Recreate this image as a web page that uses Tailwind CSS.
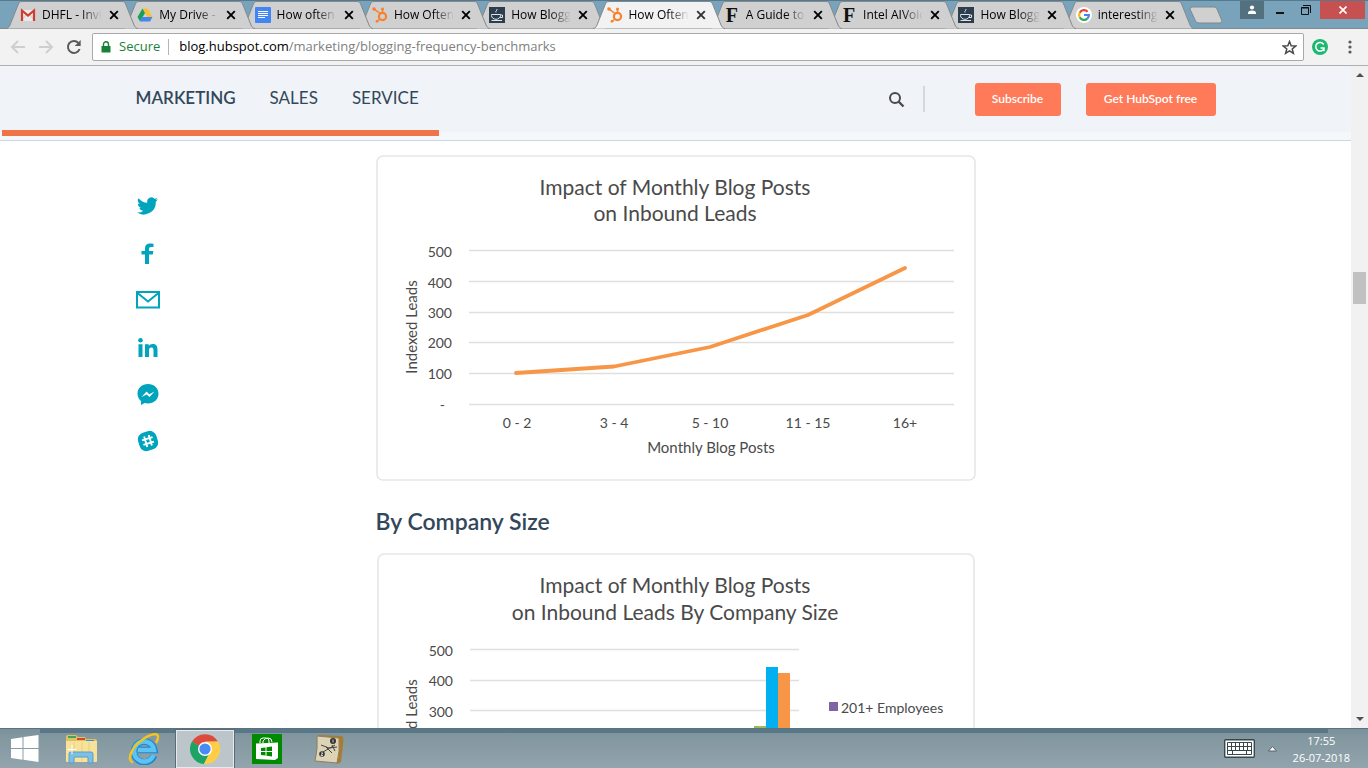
<!DOCTYPE html>
<html lang="en">
<head>
    <meta charset="UTF-8">
    <meta name="viewport" content="width=device-width, initial-scale=1.0">
    <title>How Often Should You Blog?</title>
    <script src="https://cdn.jsdelivr.net/npm/@tailwindcss/browser@4"></script>
</head>
<body class="h-screen flex flex-col overflow-hidden bg-white font-['Open_Sans',sans-serif]">

    <!-- Shared shapes -->
    <svg class="hidden">
        <symbol id="tab" viewBox="0 0 132 29">
            <path d="M0 28.5 C2 28.5 3 27 4 25 L12 5 C13 2.500 14 1.500 16 1.500 H116 C118 1.500 119 2.500 120 5 L128 25 C129 27 130 28.500 132 28.500 Z" fill="currentColor"/>
            <path d="M0 28.500 C2 28.500 3 27 4 25 L12 5 C13 2.500 14 1.500 16 1.500 H116 C118 1.500 119 2.500 120 5 L128 25 C129 27 130 28.500 132 28.500" fill="none" stroke="#83898d"/>
        </symbol>
        <symbol id="close" viewBox="0 0 10 10">
            <path d="M1.200 1.200 L8.800 8.800 M8.800 1.200 L1.200 8.800" stroke="currentColor" stroke-width="1.900"/>
        </symbol>
        <symbol id="gmail" viewBox="0 0 16 16">
            <path d="M1 3h14v11H1z" fill="#e9e9e9"/>
            <path d="M1 14 L6 8 M15 14 L10 8" stroke="#c9c9c9" fill="none"/>
            <path d="M2 14 V3.500 L8 8.500 L14 3.500 V14" fill="none" stroke="#d33b2f" stroke-width="2.200"/>
        </symbol>
        <symbol id="drive" viewBox="0 0 16 16">
            <path d="M5.500 1.500h5l5 8.500h-5z" fill="#fbc02d"/>
            <path d="M5.500 1.500L8 6 3 14.500 0.500 10z" fill="#1a9f5a"/>
            <path d="M5.400 10h10.100L13 14.500H3z" fill="#4285f4"/>
        </symbol>
        <symbol id="docs" viewBox="0 0 16 16">
            <rect width="16" height="16" rx="1" fill="#4285f4"/>
            <path d="M3 4.500h10M3 6.500h10M3 8.500h10M3 10.500h7" stroke="#fff"/>
        </symbol>
        <symbol id="sprocket" viewBox="0 0 16 16">
            <g fill="none" stroke="#f8812f">
                <circle cx="10.500" cy="9.500" r="3.600" stroke-width="2.200"/>
                <path d="M2 1.800 L8 6.500 M10.500 6 V2.500 M8 12 L5 14.500" stroke-width="1.500"/>
            </g>
            <g fill="#f8812f">
                <circle cx="2" cy="2" r="1.800"/>
                <circle cx="10.500" cy="2" r="1.500"/>
                <circle cx="5" cy="14.300" r="1.400"/>
            </g>
        </symbol>
        <symbol id="cup" viewBox="0 0 16 16">
            <rect width="16" height="16" fill="#2c3e4e"/>
            <path d="M2.500 7.500h9v1a4.500 3.800 0 0 1-9 0z M11.500 8h2v2.500h-2.500 M2.500 13.500h10.500 M7 5.500C6 4 8.500 3.500 8 2" fill="none" stroke="#dfe5e8"/>
        </symbol>
        <symbol id="google" viewBox="0 0 16 16">
            <circle cx="8" cy="8" r="8" fill="#fff"/>
            <g fill="none" stroke-width="2.200">
                <path d="M11.600 4.700A4.900 4.900 0 0 0 3.700 5.700" stroke="#ea4335"/>
                <path d="M3.700 5.700A4.900 4.900 0 0 0 3.700 10.300" stroke="#fbbc05"/>
                <path d="M3.700 10.300A4.900 4.900 0 0 0 11.300 11.600" stroke="#34a853"/>
                <path d="M11.300 11.600A4.900 4.900 0 0 0 12.900 8H8" stroke="#4285f4"/>
            </g>
        </symbol>
    </svg>

    <!-- Tab strip -->
    <div class="h-[29px] shrink-0 flex bg-[#79a3bb] border-t border-[#557a8e] shadow-[inset_0_-1px_0_#83898d] text-xs text-black">
        <div class="w-[1173px] ml-1.5 -mt-px grid grid-cols-10">
            <div class="relative z-9 w-[132px] h-[29px] pl-3.5 flex items-center text-[#d0d0d0]">
                <svg class="absolute inset-0 w-full h-full"><use href="#tab"/></svg>
                <svg class="relative w-4 h-4 shrink-0"><use href="#gmail"/></svg>
                <button class="relative ml-1.5 w-[60px] overflow-hidden whitespace-nowrap text-left text-black [mask-image:linear-gradient(to_right,#000_65%,transparent)]">DHFL - Invitation</button>
                <button aria-label="Close tab" class="relative ml-[7px] text-black"><svg class="w-2.5 h-2.5"><use href="#close"/></svg></button>
            </div>
            <div class="relative z-8 w-[132px] h-[29px] pl-3.5 flex items-center text-[#d0d0d0]">
                <svg class="absolute inset-0 w-full h-full"><use href="#tab"/></svg>
                <svg class="relative w-4 h-4 shrink-0"><use href="#drive"/></svg>
                <button class="relative ml-1.5 w-[60px] overflow-hidden whitespace-nowrap text-left text-black [mask-image:linear-gradient(to_right,#000_65%,transparent)]">My Drive - </button>
                <button aria-label="Close tab" class="relative ml-[7px] text-black"><svg class="w-2.5 h-2.5"><use href="#close"/></svg></button>
            </div>
            <div class="relative z-7 w-[132px] h-[29px] pl-3.5 flex items-center text-[#d0d0d0]">
                <svg class="absolute inset-0 w-full h-full"><use href="#tab"/></svg>
                <svg class="relative w-4 h-4 shrink-0"><use href="#docs"/></svg>
                <button class="relative ml-1.5 w-[60px] overflow-hidden whitespace-nowrap text-left text-black [mask-image:linear-gradient(to_right,#000_65%,transparent)]">How often</button>
                <button aria-label="Close tab" class="relative ml-[7px] text-black"><svg class="w-2.5 h-2.5"><use href="#close"/></svg></button>
            </div>
            <div class="relative z-6 w-[132px] h-[29px] pl-3.5 flex items-center text-[#d0d0d0]">
                <svg class="absolute inset-0 w-full h-full"><use href="#tab"/></svg>
                <svg class="relative w-4 h-4 shrink-0"><use href="#sprocket"/></svg>
                <button class="relative ml-1.5 w-[60px] overflow-hidden whitespace-nowrap text-left text-black [mask-image:linear-gradient(to_right,#000_65%,transparent)]">How Often</button>
                <button aria-label="Close tab" class="relative ml-[7px] text-black"><svg class="w-2.5 h-2.5"><use href="#close"/></svg></button>
            </div>
            <div class="relative z-5 w-[132px] h-[29px] pl-3.5 flex items-center text-[#d0d0d0]">
                <svg class="absolute inset-0 w-full h-full"><use href="#tab"/></svg>
                <svg class="relative w-4 h-4 shrink-0"><use href="#cup"/></svg>
                <button class="relative ml-1.5 w-[60px] overflow-hidden whitespace-nowrap text-left text-black [mask-image:linear-gradient(to_right,#000_65%,transparent)]">How Blogg</button>
                <button aria-label="Close tab" class="relative ml-[7px] text-black"><svg class="w-2.5 h-2.5"><use href="#close"/></svg></button>
            </div>
            <!-- Active tab -->
            <div class="relative z-20 w-[132px] h-[29px] pl-3.5 flex items-center text-[#f2f2f2]">
                <svg class="absolute inset-0 w-full h-full"><use href="#tab"/></svg>
                <svg class="relative w-4 h-4 shrink-0"><use href="#sprocket"/></svg>
                <button class="relative ml-1.5 w-[60px] overflow-hidden whitespace-nowrap text-left text-black [mask-image:linear-gradient(to_right,#000_65%,transparent)]">How Often</button>
                <button aria-label="Close tab" class="relative ml-[7px] text-[#333]"><svg class="w-2.5 h-2.5"><use href="#close"/></svg></button>
            </div>
            <div class="relative z-4 w-[132px] h-[29px] pl-3.5 flex items-center text-[#d0d0d0]">
                <svg class="absolute inset-0 w-full h-full"><use href="#tab"/></svg>
                <span class="relative w-4 shrink-0 text-center font-['Liberation_Serif',serif] font-bold text-xl leading-4 text-[#111]">F</span>
                <button class="relative ml-1.5 w-[60px] overflow-hidden whitespace-nowrap text-left text-black [mask-image:linear-gradient(to_right,#000_65%,transparent)]">A Guide to</button>
                <button aria-label="Close tab" class="relative ml-[7px] text-black"><svg class="w-2.5 h-2.5"><use href="#close"/></svg></button>
            </div>
            <div class="relative z-3 w-[132px] h-[29px] pl-3.5 flex items-center text-[#d0d0d0]">
                <svg class="absolute inset-0 w-full h-full"><use href="#tab"/></svg>
                <span class="relative w-4 shrink-0 text-center font-['Liberation_Serif',serif] font-bold text-xl leading-4 text-[#111]">F</span>
                <button class="relative ml-1.5 w-[60px] overflow-hidden whitespace-nowrap text-left text-black [mask-image:linear-gradient(to_right,#000_65%,transparent)]">Intel AIVoice</button>
                <button aria-label="Close tab" class="relative ml-[7px] text-black"><svg class="w-2.5 h-2.5"><use href="#close"/></svg></button>
            </div>
            <div class="relative z-2 w-[132px] h-[29px] pl-3.5 flex items-center text-[#d0d0d0]">
                <svg class="absolute inset-0 w-full h-full"><use href="#tab"/></svg>
                <svg class="relative w-4 h-4 shrink-0"><use href="#cup"/></svg>
                <button class="relative ml-1.5 w-[60px] overflow-hidden whitespace-nowrap text-left text-black [mask-image:linear-gradient(to_right,#000_65%,transparent)]">How Blogg</button>
                <button aria-label="Close tab" class="relative ml-[7px] text-black"><svg class="w-2.5 h-2.5"><use href="#close"/></svg></button>
            </div>
            <div class="relative z-1 w-[132px] h-[29px] pl-3.5 flex items-center text-[#d0d0d0]">
                <svg class="absolute inset-0 w-full h-full"><use href="#tab"/></svg>
                <svg class="relative w-4 h-4 shrink-0"><use href="#google"/></svg>
                <button class="relative ml-1.5 w-[60px] overflow-hidden whitespace-nowrap text-left text-black [mask-image:linear-gradient(to_right,#000_65%,transparent)]">interesting</button>
                <button aria-label="Close tab" class="relative ml-[7px] text-black"><svg class="w-2.5 h-2.5"><use href="#close"/></svg></button>
            </div>
        </div>
        <button aria-label="New tab" class="ml-2.5 self-center">
            <svg width="34" height="18" viewBox="0 0 34 18"><path d="M3.500 1 H25 Q27 1 28 3 L33 15 Q33 17 31 17 H10 Q7.500 17 6.500 15 L1 3 Q1 1 3.500 1 Z" fill="#d0d0d0" stroke="#83898d"/></svg>
        </button>

        <!-- Window buttons -->
        <div class="ml-auto mr-[3px] h-[18px] flex items-stretch">
            <button aria-label="Profile" class="w-6 bg-[#53707f] grid place-items-center">
                <svg width="10" height="10" viewBox="0 0 10 10" fill="#fff"><circle cx="5" cy="2.500" r="2.100"/><path d="M1 9V7.500Q1.500 5.500 5 5.500T9 7.500V9z"/></svg>
            </button>
            <button aria-label="Minimize" class="w-8 grid place-items-center">
                <svg width="8" height="10" viewBox="0 0 8 10"><path d="M0 8h8" stroke="#111" stroke-width="2"/></svg>
            </button>
            <button aria-label="Restore" class="w-6 pr-1 grid place-items-center">
                <svg width="10" height="10" viewBox="0 0 10 10" fill="none" stroke="#111"><path d="M2 .5h7.500v7.500M.5 2.500h7v7h-7z"/><path d="M0 3h8"/></svg>
            </button>
            <button aria-label="Close" class="w-[45px] bg-[#c75050] grid place-items-center">
                <svg width="8" height="8" viewBox="0 0 8 8"><path d="M.5.5l7 7M7.500.5l-7 7" stroke="#fff" stroke-width="1.700"/></svg>
            </button>
        </div>
    </div>

    <!-- Toolbar -->
    <div class="h-[37px] shrink-0 bg-[#f2f2f2] border-b border-[#b0b0b0] flex items-center pl-2.5">
        <button aria-label="Back" class="w-7"><svg width="16" height="16" viewBox="0 0 16 16" fill="none" stroke="#cfcfcf" stroke-width="2"><path d="M15 8H2.500M8 2L2 8l6 6"/></svg></button>
        <button aria-label="Forward" class="w-7"><svg width="16" height="16" viewBox="0 0 16 16" fill="none" stroke="#cfcfcf" stroke-width="2"><path d="M1 8h12.500M8 2l6 6-6 6"/></svg></button>
        <button aria-label="Reload" class="w-[26px]"><svg width="16" height="16" viewBox="0 0 16 16"><path d="M13.600 10A6 6 0 1 1 12.400 3.900" fill="none" stroke="#5a5a5a" stroke-width="2"/><path d="M14.700 1v6h-6z" fill="#5a5a5a"/></svg></button>
        <div class="flex-1 h-7 rounded-xs border border-[#a9a9a9] bg-white flex items-center pl-2 pr-1.5 text-[13px] whitespace-nowrap">
            <svg width="10" height="12" viewBox="0 0 10 12"><path d="M.5 5h9v6.500h-9z" fill="#188038"/><path d="M2.500 5V3.200a2.500 2.500 0 0 1 5 0V5" fill="none" stroke="#188038" stroke-width="1.400"/></svg>
            <span class="ml-2 text-[#188038]">Secure</span>
            <span class="ml-2 w-px h-4 bg-[#b5b5b5]"></span>
            <div class="ml-2.5 flex-1 text-[#808080]" role="textbox" aria-label="Address"><span class="text-black">blog.hubspot.com</span>/marketing/blogging-frequency-benchmarks</div>
            <button aria-label="Bookmark"><svg width="15" height="15" viewBox="0 0 15 15"><path d="M7.500 1.500l1.700 4.200 4.500.3-3.500 2.900 1.200 4.400-3.900-2.500-3.900 2.500 1.200-4.400L1.300 6l4.500-.3z" fill="none" stroke="#4a4a4a" stroke-width="1.500"/></svg></button>
        </div>
        <button aria-label="Grammarly" class="ml-2"><svg width="16" height="16" viewBox="0 0 16 16"><circle cx="8" cy="8" r="8" fill="#1cb870"/><path d="M11.700 5.500A4.300 4.300 0 1 0 12 9.500M8.500 9h3.500v3.200" fill="none" stroke="#fff" stroke-width="1.500"/></svg></button>
        <button aria-label="Menu" class="ml-5 mr-4"><svg width="4" height="14" viewBox="0 0 4 14" fill="#5a5a5a"><circle cx="2" cy="2" r="1.600"/><circle cx="2" cy="7" r="1.600"/><circle cx="2" cy="12" r="1.600"/></svg></button>
    </div>

    <!-- Viewport -->
    <div class="flex-1 min-h-0 flex">
        <div class="flex-1 min-w-0 overflow-hidden">
            <header class="relative h-[75px] bg-[#f0f4f8] border-b border-[#cbd6e2]">
                <div class="max-w-[1080px] h-[66px] mx-auto flex items-center font-[Lato,sans-serif] text-[#33475b]">
                    <nav class="flex gap-[34px] pb-0.5 text-[17px]">
                        <a href="#" class="font-semibold">MARKETING</a>
                        <a href="#">SALES</a>
                        <a href="#">SERVICE</a>
                    </nav>
                    <button aria-label="Search" class="ml-auto"><svg width="17" height="17" viewBox="0 0 17 17" fill="none" stroke="#4a4a4a"><circle cx="7" cy="7" r="5" stroke-width="2"/><path d="M10.500 10.500l5 5" stroke-width="2.400"/></svg></button>
                    <span class="ml-[18px] w-0.5 h-[26px] bg-[#d3d8dc]"></span>
                    <button class="ml-[50px] w-[86px] h-[33px] rounded-[3px] bg-[#ff7a59] text-white text-xs font-semibold">Subscribe</button>
                    <button class="ml-[25px] w-[130px] h-[33px] rounded-[3px] bg-[#ff7a59] text-white text-xs font-semibold">Get HubSpot free</button>
                </div>
                <div class="h-2 bg-[#f5f8fa]"></div>
                <!-- Reading progress -->
                <div class="absolute left-0.5 top-16 h-1.5 bg-[#ef7547]" style="width: 437px"></div>
            </header>

            <main class="max-w-[1080px] mx-auto flex pt-3.5">
                <div class="w-[240px] shrink-0 pt-[39px] flex flex-col gap-[23px] text-[#00a4bd]">
                    <a href="#" aria-label="Twitter" class="w-6 h-6 grid place-items-center"><svg width="21" height="18" viewBox="0 0 24 20" fill="currentColor"><path d="M24 2.400a10 10 0 0 1-2.800.8A5 5 0 0 0 23.300.5a10 10 0 0 1-3.100 1.200A4.900 4.900 0 0 0 11.800 6.200 14 14 0 0 1 1.700 1a5 5 0 0 0 1.500 6.600A5 5 0 0 1 1 7a5 5 0 0 0 3.900 4.900 5 5 0 0 1-2.200.1 5 5 0 0 0 4.600 3.400A10 10 0 0 1 0 17.500 14 14 0 0 0 21.500 5z"/></svg></a>
                    <a href="#" aria-label="Facebook" class="w-6 h-6 grid place-items-center"><svg width="13" height="21" viewBox="0 0 13 21" fill="currentColor"><path d="M4 21v-9.500H.500V8H4V5.200C4 2 6 .5 8.800.5c1.400 0 3.200.1 3.700.2V4h-2.300C8.500 4 8 4.700 8 5.800V8h4.300l-.5 3.500H8V21z"/></svg></a>
                    <a href="#" aria-label="Email" class="w-6 h-6 grid place-items-center"><svg width="24" height="18" viewBox="0 0 24 18" fill="none" stroke="currentColor" stroke-width="2"><path d="M1 1h22v15.500H1zM1.500 2L12 10.500 22.500 2"/></svg></a>
                    <a href="#" aria-label="LinkedIn" class="w-6 h-6 grid place-items-center"><svg width="20" height="19" viewBox="0 0 20 19" fill="currentColor"><circle cx="2.500" cy="2.300" r="2.300"/><path d="M.5 6.300h4V19h-4zM7 6.300h3.800V8C11.500 6.800 12.800 6 14.700 6 18.700 6 19.500 8.600 19.500 12v7h-4v-6.200c0-1.500 0-3.400-2.100-3.400S11 11 11 12.700V19H7z"/></svg></a>
                    <a href="#" aria-label="Messenger" class="w-6 h-6 grid place-items-center"><svg width="22" height="21" viewBox="0 0 22 21"><path d="M11 0C5 0 .5 4.200.5 9.700c0 2.900 1.300 5.400 3.500 7.200V21l3.600-2c1 .3 2.200.4 3.400.4 6 0 10.500-4.200 10.500-9.700S17 0 11 0z" fill="currentColor"/><path d="M4.500 13L9.500 7.500l2.800 2.700 5.200-2.700-5 5.500-2.800-2.600z" fill="#fff"/></svg></a>
                    <a href="#" aria-label="Slack" class="w-6 h-6 grid place-items-center"><svg width="22" height="22" viewBox="0 0 22 22"><g transform="rotate(-17 11 11)"><rect x="1.500" y="1.500" width="19" height="19" rx="7" fill="currentColor"/><path d="M8.600 5.500v11M13.400 5.500v11M5.500 8.600h11M5.500 13.400h11" stroke="#fff" stroke-width="1.900"/></g></svg></a>
                </div>

                <article class="flex-1 max-w-[600px]">
                    <svg class="block w-full h-[326px] font-[Lato,sans-serif]" viewBox="0 0 600 326" fill="#4a4a4a" role="img" aria-label="Impact of monthly blog posts on inbound leads">
                        <rect x="1" y="1" width="598" height="324" rx="6" fill="#fff" stroke="#e6e6e6" stroke-width="1.600"/>
                        <g font-size="21" text-anchor="middle">
                            <text x="299" y="40">Impact of Monthly Blog Posts</text>
                            <text x="299" y="66">on Inbound Leads</text>
                        </g>
                        <path d="M93 95.500h485M93 126.500h485M93 157.500h485M93 187.500h485M93 218.500h485M93 249.500h485" stroke="#dfdfdf" stroke-width="1.500"/>
                        <path d="M140 218L238 211.500 334 192 432 160 529 113" fill="none" stroke="#f79646" stroke-width="3.800" stroke-linecap="round" stroke-linejoin="round"/>
                        <g font-size="14" text-anchor="end">
                            <text x="76" y="102">500</text>
                            <text x="76" y="133">400</text>
                            <text x="76" y="163">300</text>
                            <text x="76" y="193">200</text>
                            <text x="76" y="224">100</text>
                            <text x="69" y="255">-</text>
                        </g>
                        <g font-size="14" text-anchor="middle">
                            <text x="141" y="273">0 - 2</text>
                            <text x="238" y="273">3 - 4</text>
                            <text x="334" y="273">5 - 10</text>
                            <text x="432" y="273">11 - 15</text>
                            <text x="529" y="273">16+</text>
                            <text x="335" y="298" font-size="15">Monthly Blog Posts</text>
                            <text transform="translate(41 172) rotate(-90)" font-size="15">Indexed Leads</text>
                        </g>
                    </svg>

                    <h2 class="mt-6 mb-4 text-[23px] leading-8 font-semibold font-[Lato,sans-serif] text-[#33475b]">By Company Size</h2>

                    <svg class="block w-full h-[326px] font-[Lato,sans-serif]" viewBox="0 0 600 326" fill="#4a4a4a" role="img" aria-label="Impact of monthly blog posts on inbound leads by company size">
                        <rect x="2" y="1" width="596" height="324" rx="6" fill="#fff" stroke="#e6e6e6" stroke-width="1.600"/>
                        <g font-size="21" text-anchor="middle">
                            <text x="299" y="40">Impact of Monthly Blog Posts</text>
                            <text x="299" y="67">on Inbound Leads By Company Size</text>
                        </g>
                        <path d="M94 96.500h329M94 127.500h329M94 157.500h329M94 188.500h329M94 218.500h329M94 249.500h329" stroke="#dfdfdf" stroke-width="1.500"/>
                        <path d="M378 173h12v77h-12z" fill="#9bbb59"/>
                        <path d="M390 114h12v136h-12z" fill="#00b0f0"/>
                        <path d="M402 120h12v130h-12z" fill="#f79646"/>
                        <g font-size="14" text-anchor="end">
                            <text x="77" y="103">500</text>
                            <text x="77" y="133">400</text>
                            <text x="77" y="164">300</text>
                        </g>
                        <text transform="translate(41 173) rotate(-90)" font-size="15" text-anchor="middle">Indexed Leads</text>
                        <path d="M453 149h9v9h-9z" fill="#8064a2"/>
                        <text x="465" y="160" font-size="14">201+ Employees</text>
                    </svg>
                </article>
            </main>
        </div>

        <!-- Scrollbar -->
        <div class="w-[17px] bg-[#f1f1f1] flex flex-col items-center">
            <svg class="mt-1.5" width="8" height="6" viewBox="0 0 8 6"><path d="M4 1l4 4H0z" fill="#505050"/></svg>
            <div class="mt-[194px] w-[13px] h-8 bg-[#c1c1c1]"></div>
            <svg class="mt-auto mb-1.5" width="8" height="6" viewBox="0 0 8 6"><path d="M4 5l4-4H0z" fill="#505050"/></svg>
        </div>
    </div>

    <!-- Taskbar -->
    <footer class="relative h-10 shrink-0 flex items-center border-t border-[#5a7280] bg-linear-to-b from-[#7a929e] from-0% via-[#82979f] via-20% to-[#93a4ad] text-white text-xs">
        <!-- Window shadow seen through the glass -->
        <div class="absolute left-10 right-10 top-0 h-1 bg-[#5a7787]"></div>
        <button aria-label="Start" class="relative w-[50px] grid place-items-center"><svg width="28" height="27" viewBox="0 0 28 27" fill="#fff"><path d="M0 4l11.500-1.700V13H0zM12.500 2.100L27.500 0v13h-15zM0 14h11.500v10.700L0 23zM12.500 14h15v13l-15-2.200z"/></svg></button>
        <button aria-label="File Explorer" class="relative w-[62px] grid place-items-center">
            <svg width="34" height="30" viewBox="0 0 34 30">
                <path d="M2 3q0-2 2-2h8l2 2h7l1 2h9q2 0 2 2v19H2z" fill="#e0c266"/>
                <path d="M4 2h8v2H4z" fill="#3fa35a"/><path d="M13 4h8v2h-8z" fill="#d8452f"/><path d="M22 6h8v2h-8z" fill="#3b8bd0"/>
                <path d="M2 7h31v20q0 1-1 1H3q-1 0-1-1z" fill="#f6e29a"/>
                <path d="M10 8v19M18 8v19M25 8v19" stroke="#ecd07a"/>
                <path d="M5 29V20q0-2 2-2h20q2 0 2 2v9h-5v-6H10v6z" fill="#7cc0e6" stroke="#5a9cc8"/>
                <path d="M8 11v9M3.500 15.500h9" stroke="#fff"/>
            </svg>
        </button>
        <button aria-label="Internet Explorer" class="relative w-16 grid place-items-center">
            <svg width="32" height="32" viewBox="0 0 32 32" fill="none">
                <path d="M26 22.500A10.300 10.300 0 1 1 26.500 17H10" stroke="#1f87cf" stroke-width="6.500"/>
                <path d="M25.500 22A10 10 0 1 1 26 17H10" stroke="#5cc4f2" stroke-width="4.500"/>
                <path d="M5 29.500C-2 27 4 14 14 7S30 0 30 3.500 29 8 28 10" stroke="#f3c322" stroke-width="2.500"/>
            </svg>
        </button>
        <button aria-label="Google Chrome" class="relative w-[58px] h-[38px] border border-[#e4eaed] bg-[#bcc5c9] outline outline-[#5d6b73] grid place-items-center">
            <svg width="30" height="30" viewBox="0 0 30 30">
                <path d="M15 15L2 7.800A15 15 0 0 1 28 7.500L15 8z" fill="#dd4b3e"/>
                <path d="M2 7.500A15 15 0 0 0 14 30l6-11.500L15 15z" fill="#1da462"/>
                <path d="M28 7.500A15 15 0 0 1 14 30L21.500 15 15 7.500z" fill="#ffcd46"/>
                <circle cx="15" cy="15" r="7" fill="#fff"/><circle cx="15" cy="15" r="5.600" fill="#4a8af4"/>
            </svg>
        </button>
        <button aria-label="Store" class="relative w-[66px] grid place-items-center">
            <svg width="30" height="30" viewBox="0 0 30 30">
                <path d="M0 0h30v30H0z" fill="#008a00"/>
                <path d="M4 9.500l22-1V24l-3 2-19-1z" fill="#fff"/>
                <path d="M8 9V7q0-3 3-3h3q3 0 3 3v2M11 9V7q2-3 5-3 4 0 4 4" fill="none" stroke="#fff"/>
                <path d="M9 14l4.500-.5V17H9zM14.500 13.300l5.500-.8V17h-5.500zM9 18h4.500v3.500L9 21zM14.500 18H20v4.500l-5.500-.8z" fill="#008a00"/>
            </svg>
        </button>
        <button aria-label="Strategy notes" class="relative w-[58px] grid place-items-center">
            <svg width="30" height="32" viewBox="0 0 30 32">
                <path d="M4 2l24 1q2 1 1 8l-2 18-4 2z" fill="#a87c2c"/>
                <path d="M3 3l22 2q1 14-2 25L1 28Q4 16 3 3z" fill="#ddd3b6" stroke="#8d7f5e"/>
                <path d="M7 12l8 3 8-1M9 19l12-7M12 14l6 6M18 12l3 6" fill="none" stroke="#444"/>
                <circle cx="19" cy="8" r="3" fill="#333"/><circle cx="8" cy="21" r="2.800" fill="#333"/>
                <path d="M19 6.500v3M7 20h2l-2 2.500h2" fill="none" stroke="#ddd" stroke-width=".9"/>
            </svg>
        </button>

        <!-- Tray -->
        <button aria-label="Touch keyboard" class="relative ml-auto"><svg width="31" height="19" viewBox="0 0 31 19"><rect x=".7" y=".7" width="29.600" height="17.600" rx="1" fill="#fff" stroke="#37474a" stroke-width="1.400"/><path d="M3.500 3.500h24v12h-24zM3.500 7.500h24M3.500 11.500h24M7.500 3.500v8M11.500 3.500v8M15.500 3.500v8M19.500 3.500v8M23.500 3.500v8M8.500 11.500v4M22.500 11.500v4" fill="none" stroke="#37474a"/></svg></button>
        <button aria-label="Show hidden icons" class="relative ml-[13px]"><svg width="9" height="6" viewBox="0 0 9 6"><path d="M4.500.5l4 4.500H.5z" fill="#fff" stroke="#53636c"/></svg></button>
        <div class="relative ml-4 mr-[18px] text-center text-[11px] leading-[17px]">
            <div>17:55</div>
            <div>26-07-2018</div>
        </div>
    </footer>
</body>
</html>
